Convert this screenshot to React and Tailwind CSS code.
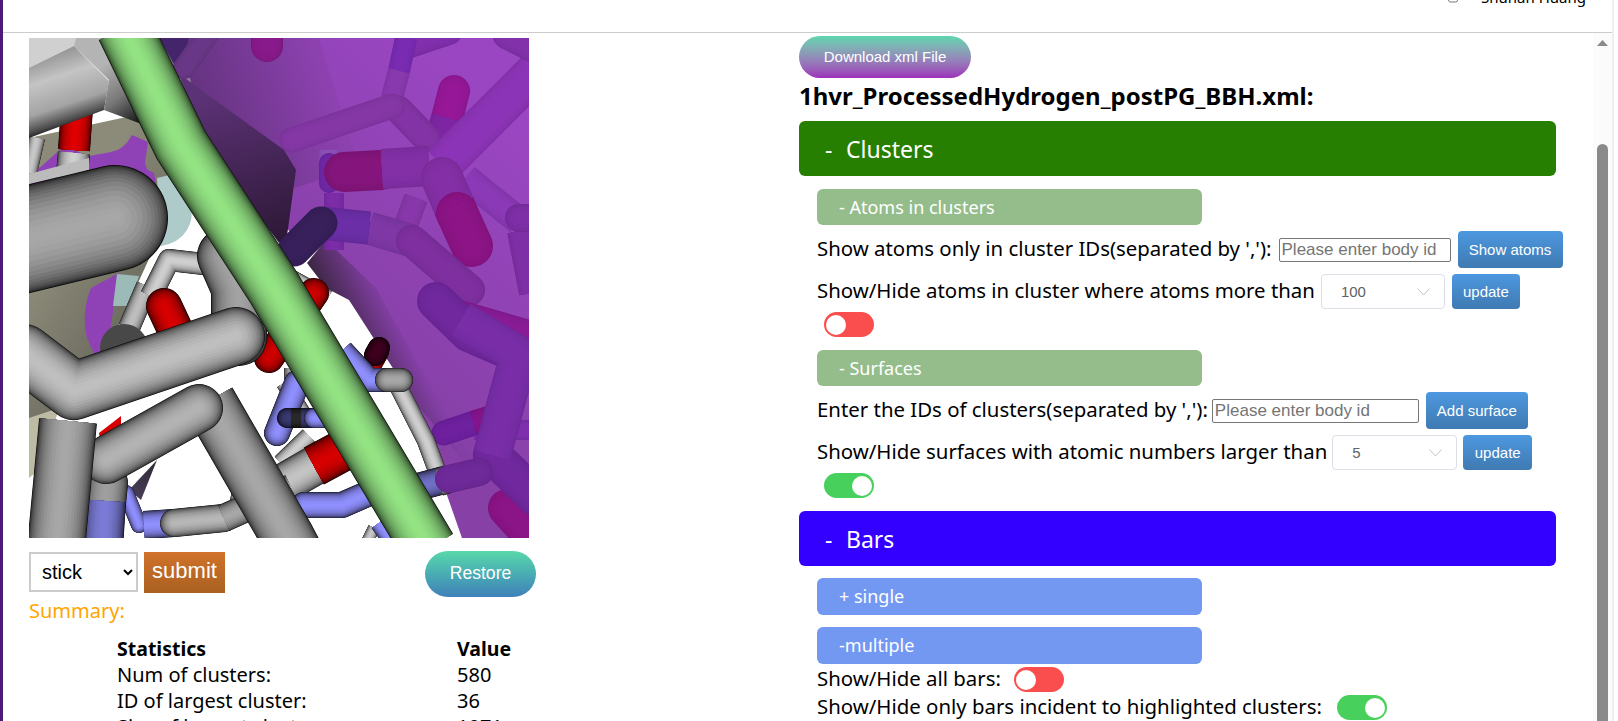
import React from "react";

const hex = (c, f) => {
  const n = parseInt(c.slice(1), 16);
  const ch = (s) => Math.round(Math.min(255, ((n >> s) & 255) * f));
  return `rgb(${ch(16)},${ch(8)},${ch(0)})`;
};
const ROUND_T = [1, 0.985, 0.965, 0.94, 0.91, 0.87, 0.82, 0.76, 0.69, 0.61, 0.52, 0.42, 0.31, 0.2, 0.1];
const lam = (t) => Math.pow(Math.max(0, 1 - t * t), 0.42);
const FLAT_T = [1, 0.95, 0.88, 0.78, 0.64, 0.45];

function Tube({ p, w, c, cap = "round", flat = false, o = 1 }) {
  const ts = flat ? FLAT_T : ROUND_T;
  return (
    <g opacity={o} fill="none" strokeLinecap={cap} strokeLinejoin="round">
      {ts.map((t, i) => (
        <polyline
          key={i}
          points={p}
          stroke={hex(c, flat ? 0.9 + 0.1 * Math.sqrt(1 - t * t) : 0.04 + 0.96 * lam(t))}
          strokeWidth={w * t}
        />
      ))}
    </g>
  );
}

function Molecule() {
  return (
    <svg viewBox="0 0 500 500" className="block w-[500px] h-[500px] shrink-0">
      <defs>
        <linearGradient id="dim" x1="130" y1="40" x2="290" y2="0" gradientUnits="userSpaceOnUse">
          <stop offset="0" stopColor="#3d2550" />
          <stop offset="1" stopColor="#8a40ac" />
        </linearGradient>
        <linearGradient id="dark" x1="200" y1="50" x2="250" y2="215" gradientUnits="userSpaceOnUse">
          <stop offset="0" stopColor="#5c3276" />
          <stop offset="1" stopColor="#2a1632" />
        </linearGradient>
        <linearGradient id="shade" x1="290" y1="280" x2="350" y2="250" gradientUnits="userSpaceOnUse">
          <stop offset="0" stopColor="#282028" />
          <stop offset="1" stopColor="#843fa6" />
        </linearGradient>
        <linearGradient id="purp" x1="300" y1="300" x2="500" y2="100" gradientUnits="userSpaceOnUse">
          <stop offset="0" stopColor="#8640a6" />
          <stop offset="1" stopColor="#9a46c2" />
        </linearGradient>
        <linearGradient id="beige" x1="0" y1="250" x2="80" y2="300" gradientUnits="userSpaceOnUse">
          <stop offset="0" stopColor="#8c8a78" />
          <stop offset="1" stopColor="#6f6e62" />
        </linearGradient>
        <linearGradient id="topt" x1="24" y1="10" x2="50" y2="88" gradientUnits="userSpaceOnUse">
          <stop offset="0" stopColor="#8c8c8c" />
          <stop offset="0.35" stopColor="#c4c4c4" />
          <stop offset="0.7" stopColor="#a4a4a4" />
          <stop offset="0.9" stopColor="#484848" />
          <stop offset="1" stopColor="#000000" />
        </linearGradient>
        <linearGradient id="wedge" x1="70" y1="30" x2="112" y2="88" gradientUnits="userSpaceOnUse">
          <stop offset="0" stopColor="#b4b4b4" />
          <stop offset="0.5" stopColor="#787878" />
          <stop offset="1" stopColor="#0a0a0a" />
        </linearGradient>
        <linearGradient id="shard" x1="105" y1="460" x2="128" y2="425" gradientUnits="userSpaceOnUse">
          <stop offset="0" stopColor="#4a3c5a" />
          <stop offset="1" stopColor="#2c2c34" />
        </linearGradient>
      </defs>
      <rect width="500" height="500" fill="#fff" />

      {/* left backdrop */}
      <polygon points="0,100 130,72 140,150 125,210 70,330 20,380 0,420" fill="url(#beige)" />
      <polygon points="0,380 30,370 12,430 0,440" fill="#bdbba4" />
      <path d="M6 134 L35 108 L60 118 L82 114 L125 135 L128 150 L0 150 Z" fill="#8f42b5" />
      <path d="M82 114 Q95 112 103 97 L119 104 L116 125 Q118 135 128 142 L100 125 Z" fill="#8f42b5" />
      <path d="M58 300 Q52 275 62 250 L90 235 L80 300 L68 322 Z" fill="#8f42b5" />
      <path d="M128 140 L145 136 Q172 170 158 192 Q150 205 132 208 Z" fill="#aecbca" />
      <polygon points="88,236 110,238 100,268 84,268" fill="#9bbab8" />

      {/* purple surface */}
      <polygon points="150,0 500,0 500,500 433,500 385,363 297,202 265,198 180,110" fill="url(#purp)" />
      <polygon points="130,0 290,0 330,130 265,150 180,110" fill="url(#dim)" opacity="0.6" />
      <polygon points="149,35 255,112 267,132 258,198 250,205 180,110" fill="url(#dark)" />
      <polygon points="278,225 297,202 347,250 460,453 385,363 320,262 297,250" fill="url(#shade)" />
      <polygon points="160,0 150,35 130,0" fill="#44246a" />
      <Tube p="180,-5 155,30" w={22} c="#6a3888" flat />
      <Tube p="238,-5 238,8" w={32} c="#8a1a8c" flat />

      {/* purple tubes */}
      <Tube p="420,-6 378,8" w={26} c="#8230ae" flat />
      <Tube p="377,0 370,33" w={22} c="#7a2cb4" flat cap="butt" />
      <Tube p="370,33 363,60" w={22} c="#8a3ab0" flat cap="butt" />
      <Tube p="425,53 413,100" w={32} c="#98189a" flat />
      <Tube p="418,80 410,110" w={32} c="#7f25a6" flat cap="butt" />
      <Tube p="370,72 397,100" w={28} c="#8534a8" flat />
      <Tube p="318,128 322,118" w={16} c="#b03098" flat cap="butt" />
      <Tube p="300,112 300,140" w={20} c="#8d50b8" flat cap="butt" />
      <Tube p="300,125 300,145" w={20} c="#7028a8" flat />
      <Tube p="305,155 305,212" w={20} c="#7c2ca8" flat cap="butt" />
      <Tube p="263,102 363,68" w={25} c="#8638a8" flat />
      <Tube p="387,160 377,187" w={24} c="#8838ab" flat cap="butt" />
      <Tube p="437,140 490,183" w={28} c="#8c3ab8" flat cap="butt" />
      <Tube p="490,193 502,255" w={24} c="#8030a8" flat cap="butt" />
      <Tube p="490,180 505,180" w={28} c="#7f2fa8" flat />
      <Tube p="413,127 510,30" w={40} c="#8e35ba" flat cap="butt" />
      <Tube p="480,-5 520,15" w={34} c="#8432ad" flat />
      <Tube p="315,134 352,132" w={40} c="#86157e" flat />
      <Tube p="353,131 400,128" w={40} c="#8430a8" flat cap="butt" />
      <Tube p="413,140 425,168" w={42} c="#8630a8" flat />
      <Tube p="428,175 443,208" w={42} c="#8e1488" flat />
      <Tube p="425,168 429,177" w={42} c="#8e1488" flat cap="butt" />
      <Tube p="340,190 383,203" w={33} c="#8038a8" flat cap="butt" />
      <Tube p="292,185 340,190" w={33} c="#6c2ea8" flat cap="butt" />
      <Tube p="265,212 292,185" w={33} c="#38205c" flat />
      <Tube p="383,203 440,252" w={32} c="#8030a2" flat />
      <Tube p="420,272 500,295" w={26} c="#8a1c98" flat />
      <Tube p="445,392 505,392" w={20} c="#8030b0" flat cap="butt" />
      <Tube p="415,395 445,385" w={25} c="#6f20a0" flat />
      <Tube p="445,385 468,378" w={25} c="#84148c" flat cap="butt" />
      <Tube p="478,470 510,505" w={38} c="#8c1488" flat />
      <Tube p="407,263 440,295 490,317 463,417 510,462" w={38} c="#7228a0" flat />
      <Tube p="432,282 490,317 463,417" w={38} c="#7a2eaa" flat cap="butt" />

      {/* white gap small tubes */}
      <Tube p="216,430 208,475" w={18} c="#d0d0d0" cap="butt" />
      <Tube p="280,398 252,425" w={18} c="#d0d0d0" cap="butt" />
      <Tube p="255,345 280,385" w={16} c="#c8c8c8" cap="butt" />
      <Tube p="268,330 268,345" w={26} c="#c8c8c8" cap="butt" />
      <Tube p="268,345 248,395" w={26} c="#9090ff" />
      <Tube p="240,225 300,258" w={12} c="#d0d0d0" cap="butt" />
      <Tube p="285,255 240,320" w={30} c="#d00000" />
      <Tube p="370,350 397,403 407,430" w={18} c="#d0d0d0" cap="butt" />
      <Tube p="340,322 332,338" w={18} c="#c8c8c8" cap="butt" />
      <Tube p="350,314 342,328" w={20} c="#d00000" cap="round" />
      <Tube p="350,310 346,317" w={22} c="#400020" />
      <Tube p="313,313 340,342 360,342" w={24} c="#9090ff" cap="butt" />
      <Tube p="358,342 372,342" w={24} c="#a8a8a8" />
      <Tube p="290,380 258,380" w={20} c="#3a3a70" />
      <Tube p="262,380 272,380" w={20} c="#2a2a2a" cap="butt" />
      <Tube p="285,380 295,380" w={20} c="#9090ff" />
      <Tube p="290,425 255,445" w={40} c="#c4c4c4" cap="butt" />
      <Tube p="285,428 322,408" w={42} c="#d80000" cap="butt" />
      <Tube p="260,468 275,468" w={22} c="#c8c8c8" cap="butt" />
      <Tube p="275,467 313,467 352,450" w={26} c="#9090ff" />
      <Tube p="345,490 335,510" w={12} c="#c8c8c8" cap="butt" />
      <Tube p="350,485 368,510" w={18} c="#9090ff" cap="butt" />
      <Tube p="385,450 415,442" w={28} c="#7070c8" cap="butt" />
      <Tube p="410,444 420,441" w={28} c="#a8a8a8" cap="butt" />
      <Tube p="420,441 450,434" w={28} c="#702a9c" flat />

      {/* grey lower left */}
      <polygon points="128,422 112,462 100,452" fill="url(#shard)" />
      <Tube p="100,290 118,248" w={22} c="#c0c0c0" cap="butt" />
      <Tube p="122,258 140,222 192,228" w={22} c="#d0d0d0" cap="butt" />
      <Tube p="135,268 150,300" w={36} c="#d80000" />
      <circle cx="95" cy="310" r="24" fill="#484848" />
      <polygon points="70,395 92,378 92,392 72,408" fill="#d80000" />
      <Tube p="97,455 110,487" w={16} c="#9090ff" />
      <Tube p="78,445 76,465" w={42} c="#a0a0a0" />
      <Tube p="76,463 73,510" w={42} c="#7c7cd8" cap="butt" />
      <Tube p="115,487 145,485" w={28} c="#9090ff" cap="butt" />
      <Tube p="145,485 195,480" w={28} c="#b8b8b8" />
      <Tube p="195,480 262,450" w={28} c="#a8a8a8" cap="butt" />
      <Tube p="180,363 258,498 275,530" w={54} c="#a8a8a8" cap="butt" />
      <Tube p="77,422 170,370" w={48} c="#b4b4b4" />
      <Tube p="39,383 27,510" w={58} c="#a8a8a8" cap="butt" />
      <Tube p="210,300 210,250 196,218" w={56} c="#a4a4a4" />
      <Tube p="-5,315 45,353 207,298" w={58} c="#c0c0c0" />

      {/* grey upper left */}
      <polygon points="0,0 50,0 50,12 0,32" fill="#d0d0d0" />
      <Tube p="48,70 45,112" w={32} c="#e00000" cap="butt" />
      <Tube p="45,115 42,145" w={32} c="#d0d0d0" cap="butt" />
      <Tube p="8,100 0,135" w={16} c="#c8c8c8" cap="butt" />
      <polygon points="0,136 60,120 60,132 0,146" fill="#bbb" />
      <polygon points="0,30 45,8 80,43 75,72 0,100" fill="url(#topt)" />
      <polygon points="47,0 100,0 150,100 75,72 80,42 45,8" fill="url(#wedge)" />
      <Tube p="-30,208 86,180" w={106} c="#a8a8a8" />

      {/* green bar */}
      <Tube p="95,-10 152,107 245,250 400,510" w={56} c="#94e484" cap="butt" />
    </svg>
  );
}

const ACC = "font-['Noto_Sans',sans-serif]";
const ARIAL = "font-['Liberation_Sans',Arial,sans-serif]";

function Toggle({ on, className = "" }) {
  return (
    <span
      className={`flex items-center w-[50px] h-[25px] rounded-full px-[2px] shrink-0 ${
        on ? "bg-[#47d15c] justify-end" : "bg-[#fa4d4d] justify-start"
      } ${className}`}
    >
      <span className="block w-[20px] h-[20px] rounded-full bg-white" />
    </span>
  );
}

function BlueBtn({ children, className = "" }) {
  return (
    <button
      className={`${ARIAL} text-[15px] text-white rounded-[4px] bg-linear-to-b from-[#4d98e0] to-[#3f7ab2] shrink-0 ${className}`}
    >
      {children}
    </button>
  );
}

function FakeSelect({ value, className = "" }) {
  return (
    <div
      className={`${ARIAL} flex items-center justify-between h-[35px] rounded-[4px] border border-[#dcdfe6] bg-white pl-[19px] pr-[14px] text-[15px] text-[#606266] shrink-0 ${className}`}
    >
      <span>{value}</span>
      <svg width="13" height="8" viewBox="0 0 13 8" fill="none" stroke="#c0c4cc" strokeWidth="1">
        <path d="M0.5 0.5 L6.5 7 L12.5 0.5" />
      </svg>
    </div>
  );
}

function MainBar({ color, children }) {
  return (
    <div
      className={`w-[757px] h-[55px] rounded-[6px] flex items-center pl-[26px] text-white text-[23px] ${color}`}
    >
      <span className="w-[21px]">-</span>
      <span>{children}</span>
    </div>
  );
}

function SubBar({ color, children, className = "" }) {
  return (
    <div
      className={`ml-[18px] w-[385px] rounded-[6px] flex items-center pl-[22px] pb-[1px] text-white text-[18px] ${color} ${className}`}
    >
      {children}
    </div>
  );
}

const inputCls = `${ARIAL} h-[24px] border border-[#767676] rounded-[2px] px-[2px] text-[17px] placeholder:text-[#757575] outline-none shrink-0`;

export default function App() {
  return (
    <div className={`${ACC} h-[721px] w-full flex overflow-hidden bg-white text-black`}>
      <div className="w-[3px] bg-[#4c1a7a] shrink-0" />
      <div className="flex-1 min-w-0 flex flex-col">
        <header className="h-[33px] shrink-0 border-b border-[#cccccc] flex justify-end overflow-hidden pr-[26px]">
          <div className="flex items-start -mt-[15px] h-[24px] gap-[22px] text-[15px] leading-[24px]">
            <svg width="12" height="24" viewBox="0 0 12 24" fill="none" stroke="#777" strokeWidth="1">
              <rect x="1.5" y="9" width="9" height="8" rx="2" />
            </svg>
            <span>Shuhan Huang</span>
          </div>
        </header>
        <div className="flex-1 flex min-h-0">
          {/* left column */}
          <div className="w-[796px] shrink-0 pl-[26px] pt-[5px]">
            <Molecule />
            <div className="flex items-start mt-[13px]">
              <select
                defaultValue="stick"
                className={`${ARIAL} w-[109px] h-[40px] mt-[1px] border-2 border-[#cccccc] bg-white pl-[7px] text-[20px]`}
              >
                <option>stick</option>
              </select>
              <button
                className={`${ARIAL} ml-[6px] mt-[1px] w-[81px] h-[41px] pb-[4px] text-[22px] text-white bg-linear-to-b from-[#d0722a] to-[#aa6020]`}
              >
                submit
              </button>
              <button
                className={`${ARIAL} ml-[200px] w-[111px] h-[46px] pb-[1px] rounded-[23px] text-[17.6px] text-white bg-linear-to-b from-[#58d8a8] to-[#4080b8]`}
              >
                Restore
              </button>
            </div>
            <div className="text-[20px] leading-[27px] text-[#ffa500]">Summary:</div>
            <div className="grid grid-cols-[340px_100px] ml-[88px] mt-[12px] text-[20px] leading-[26px]">
              <div className="font-bold text-[19.5px]">Statistics</div>
              <div className="font-bold text-[19.5px]">Value</div>
              <div>Num of clusters:</div>
              <div>580</div>
              <div>ID of largest cluster:</div>
              <div>36</div>
              <div>Size of largest cluster:</div>
              <div>1071</div>
            </div>
          </div>

          {/* right column */}
          <div className="flex-1 min-w-0 flex flex-col pt-[3px] text-[20.4px] leading-[24px]">
            <button
              className={`${ARIAL} self-start w-[172px] h-[42px] rounded-[21px] text-[15px] text-white bg-linear-to-b from-[#5bd6ae] to-[#9c2fba]`}
            >
              Download xml File
            </button>
            <h1 className="text-[24px] leading-[36px] font-bold h-[36px]">1hvr_ProcessedHydrogen_postPG_BBH.xml:</h1>
            <div className="mt-[7px]">
              <MainBar color="bg-[#267f00]">Clusters</MainBar>
            </div>
            <SubBar color="bg-[#94bd8b]" className="mt-[13px] h-[36px]">- Atoms in clusters</SubBar>
            <div className="flex items-center ml-[18px] mt-[6px] h-[37px]">
              <span className="pb-[3px]">Show atoms only in cluster IDs(separated by ','):</span>
              <input placeholder="Please enter body id" className={`${inputCls} ml-[7px] w-[172px]`} />
              <BlueBtn className="ml-[7px] w-[105px] h-[37px]">Show atoms</BlueBtn>
            </div>
            <div className="flex items-center ml-[18px] mt-[6px] h-[35px]">
              <span className="pb-[3px]">Show/Hide atoms in cluster where atoms more than</span>
              <FakeSelect value="100" className="ml-[6px] w-[124px]" />
              <BlueBtn className="ml-[7px] w-[68px] h-[35px]">update</BlueBtn>
            </div>
            <Toggle className="ml-[25px] mt-[3px]" />
            <SubBar color="bg-[#94bd8b]" className="mt-[13px] h-[36px]">- Surfaces</SubBar>
            <div className="flex items-center ml-[18px] mt-[6px] h-[37px]">
              <span className="pb-[3px]">Enter the IDs of clusters(separated by ','):</span>
              <input placeholder="Please enter body id" className={`${inputCls} ml-[4px] w-[207px]`} />
              <BlueBtn className="ml-[7px] w-[102px] h-[37px]">Add surface</BlueBtn>
            </div>
            <div className="flex items-center ml-[18px] mt-[6px] h-[35px]">
              <span className="pb-[3px]">Show/Hide surfaces with atomic numbers larger than</span>
              <FakeSelect value="5" className="ml-[5px] w-[125px]" />
              <BlueBtn className="ml-[6px] w-[69px] h-[35px]">update</BlueBtn>
            </div>
            <Toggle on className="ml-[25px] mt-[3px]" />
            <div className="mt-[13px]">
              <MainBar color="bg-[#3300ff]">Bars</MainBar>
            </div>
            <SubBar color="bg-[#7298f2]" className="mt-[12px] h-[37px]">+ single</SubBar>
            <SubBar color="bg-[#7298f2]" className="mt-[12px] h-[37px]">-multiple</SubBar>
            <div className="flex items-center ml-[18px] mt-[3px] h-[25px]">
              <span className="pb-[3px]">Show/Hide all bars:</span>
              <Toggle className="ml-[13px]" />
            </div>
            <div className="flex items-center ml-[18px] mt-[3px] h-[25px]">
              <span className="pb-[3px]">Show/Hide only bars incident to highlighted clusters:</span>
              <Toggle on className="ml-[15px]" />
            </div>
          </div>

          {/* scrollbar */}
          <div className="w-[19px] shrink-0 bg-[#fbfbfb] flex flex-col items-center">
            <svg width="11" height="6" viewBox="0 0 11 6" className="mt-[7px] fill-[#8a8a8a]">
              <path d="M5.5 0 L11 6 H0 Z" />
            </svg>
            <div className="w-[11px] flex-1 mt-[98px] rounded-t-[6px] bg-[#8a8a8a]" />
          </div>
        </div>
      </div>
      <div className="w-[6px] shrink-0 border-l-2 border-[#efefef] bg-white" />
    </div>
  );
}
